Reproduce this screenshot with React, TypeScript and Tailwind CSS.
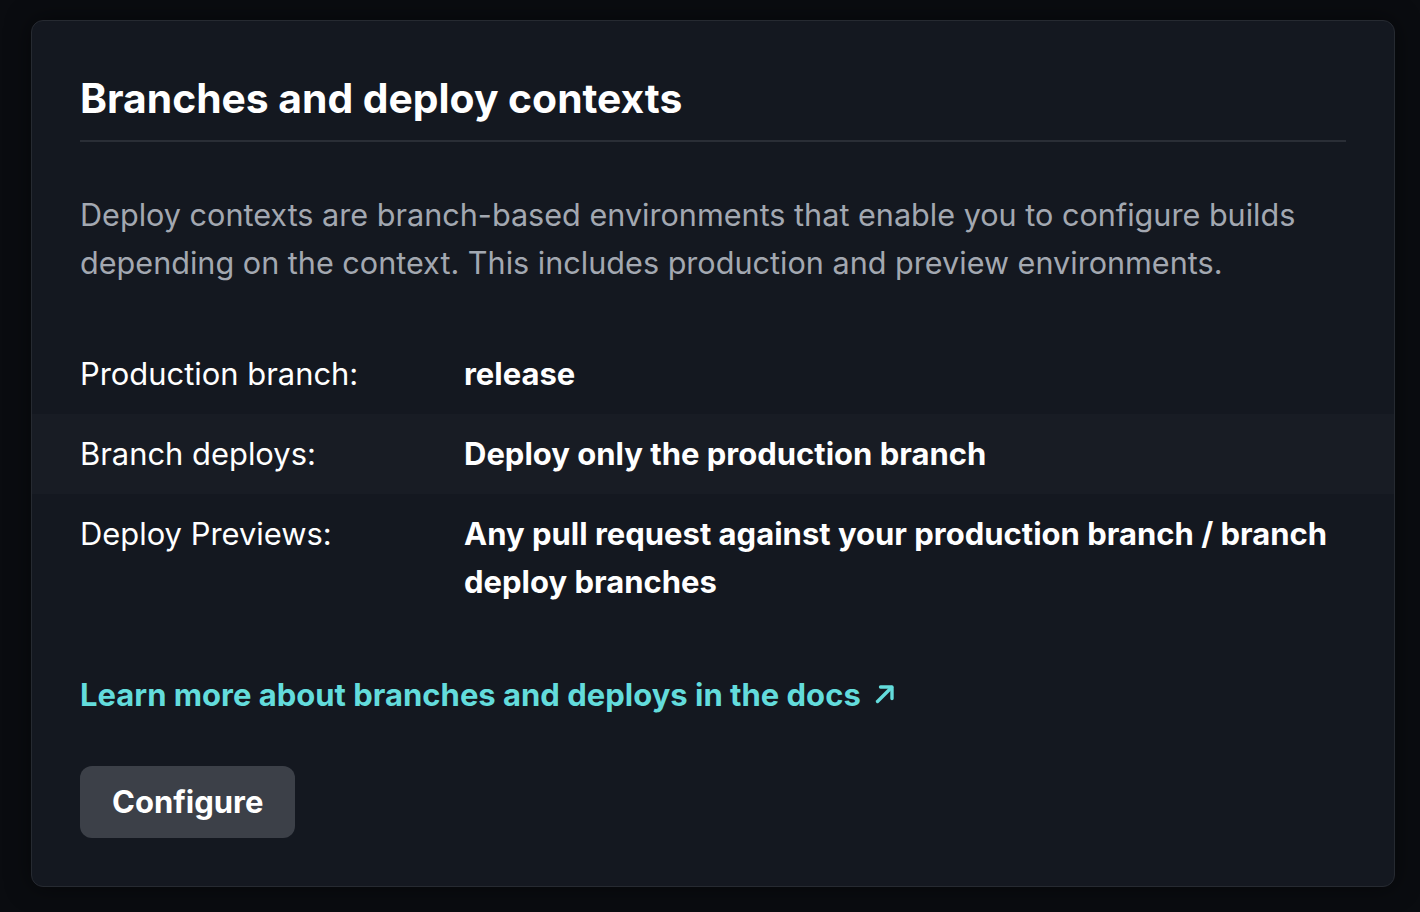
import React from 'react';

const rows = [
  { label: 'Production branch:', value: 'release' },
  { label: 'Branch deploys:', value: 'Deploy only the production branch' },
  { label: 'Deploy Previews:', value: 'Any pull request against your production branch / branch deploy branches' },
];

export default function App() {
  return (
    <div
      className="min-h-[912px] bg-[#0a0c10] pt-[20px] pb-[24px] pl-[31px] pr-[25px]"
      style={{ fontFamily: 'Inter, "Noto Sans", sans-serif' }}
    >
      <div className="rounded-[12px] border border-[#262a31] bg-[#141820] shadow-[0_0_24px_rgba(0,0,0,0.5)] py-[48px]">
        <div className="px-[48px]">
          <h2 className="text-[40.8px] leading-[56px] font-bold text-white pt-[1px] pb-[14px] border-b-2 border-[#2a2e36]">
            Branches and deploy contexts
          </h2>
          <p className="mt-[49px] text-[30.6px] leading-[48px] text-[#a3a8b1]">
            Deploy contexts are branch-based environments that enable you to configure builds depending on the
            context. This includes production and preview environments.
          </p>
        </div>

        <div className="mt-[47px]">
          {rows.map((row, i) => (
            <div
              key={row.label}
              className={`flex px-[48px] py-[16px] ${i % 2 === 1 ? 'bg-[#181c24]' : ''}`}
            >
              <div className="w-[384px] shrink-0 text-[30.9px] leading-[48px] text-white">{row.label}</div>
              <div className="flex-1 text-[31px] leading-[48px] font-bold text-white">{row.value}</div>
            </div>
          ))}
        </div>

        <div className="px-[48px]">
          <a href="#" className="mt-[49px] inline-flex items-center gap-[14px] text-[31px] leading-[48px] font-bold text-[#63dcdc]">
            Learn more about branches and deploys in the docs
            <svg className="-mt-[3px]" width="20" height="20" viewBox="0 0 20 20" fill="none" stroke="currentColor" strokeWidth="3.4" strokeLinecap="round" strokeLinejoin="round">
              <path d="M2.5 17.5 16.5 3.5" />
              <path d="M5.5 3h11.5v11.5" />
            </svg>
          </a>
          <div className="mt-[47px]">
            <button className="h-[72px] px-[32px] rounded-[12px] bg-[#3c4048] text-[31px] font-bold text-white">
              Configure
            </button>
          </div>
        </div>
      </div>
    </div>
  );
}
